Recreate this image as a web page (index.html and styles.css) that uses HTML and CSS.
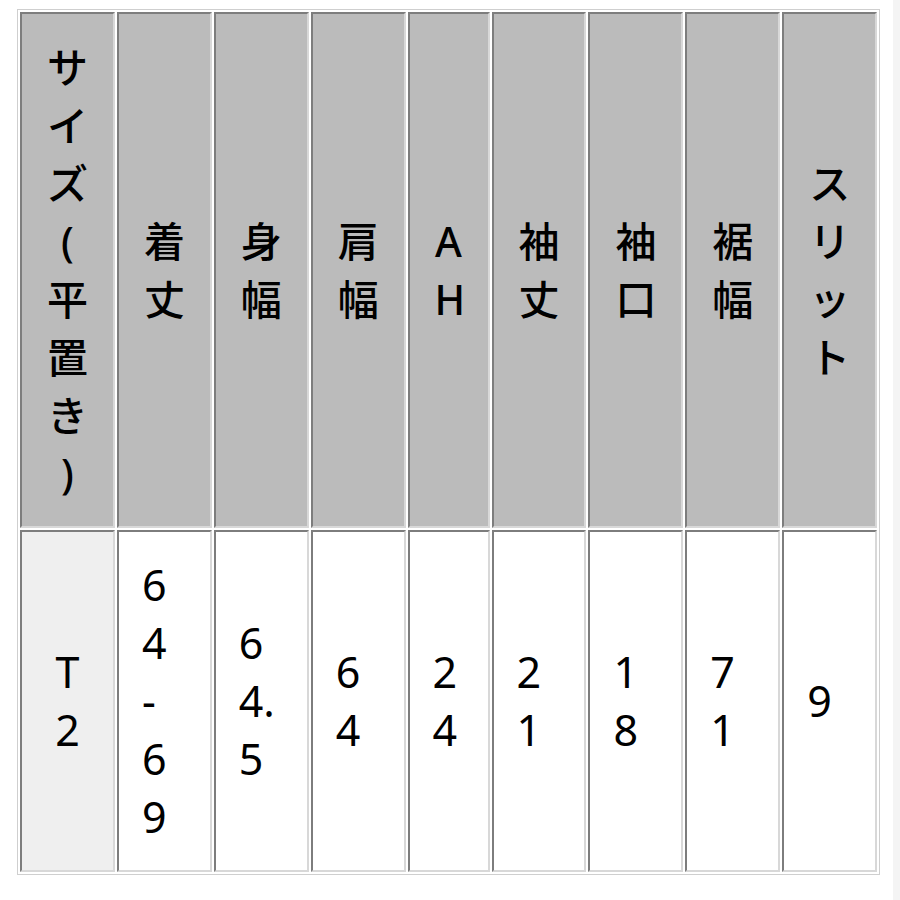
FILE: index.html
```html
<!DOCTYPE html>
<html lang="ja">
<head>
<meta charset="utf-8">
<title>サイズ表</title>
<link rel="stylesheet" href="styles.css">
</head>
<body>
<div class="page">
  <main class="content">
    <table class="size-table">
      <colgroup>
        <col><col><col><col><col class="col-narrow"><col><col><col><col>
      </colgroup>
      <tr class="head-row">
        <th><span class="txt">サイズ(平置き)</span></th>
        <th><span class="txt">着丈</span></th>
        <th><span class="txt">身幅</span></th>
        <th><span class="txt">肩幅</span></th>
        <th><span class="txt">AH</span></th>
        <th><span class="txt">袖丈</span></th>
        <th><span class="txt">袖口</span></th>
        <th><span class="txt">裾幅</span></th>
        <th><span class="txt">スリット</span></th>
      </tr>
      <tr class="data-row">
        <th class="row-head"><span class="txt">T2</span></th>
        <td><span class="num">64-69</span></td>
        <td><span class="num">64.5</span></td>
        <td><span class="num">64</span></td>
        <td><span class="num">24</span></td>
        <td><span class="num">21</span></td>
        <td><span class="num">18</span></td>
        <td><span class="num">71</span></td>
        <td><span class="num">9</span></td>
      </tr>
    </table>
  </main>
  <div class="edge"></div>
</div>
</body>
</html>
```

FILE: styles.css
```css
html, body {
  margin: 0;
  padding: 0;
  background: #ffffff;
}

.page {
  display: flex;
  min-height: 100vh;
}

.content {
  flex: 1;
  padding: 9px 0 0 17px;
}

.edge {
  width: 7px;
  background: #f4f4f4;
}

.size-table {
  table-layout: fixed;
  width: 863px;
  border-collapse: separate;
  border-spacing: 2px;
  border: 1px solid #cfcfcf;
  font-family: "Noto Sans", "Noto Sans CJK JP", sans-serif;
  font-size: 41px;
  line-height: 58px;
  color: #000;
}

.col-narrow {
  width: 82px;
}

.size-table th,
.size-table td {
  border-style: solid;
  border-width: 2px;
  border-color: #7d7d7d #d8d8d8 #d8d8d8 #7d7d7d;
  padding: 24px 25px;
  vertical-align: middle;
  font-weight: 500;
}

.head-row th {
  background: #bbbbbb;
  text-align: center;
  height: 516px;
  box-sizing: border-box;
}

.data-row th,
.data-row td {
  height: 342px;
  box-sizing: border-box;
  font-weight: normal;
  font-size: 43px;
}

.row-head {
  background: #efefef;
  text-align: center;
}

.data-row .row-head {
  padding: 24px 22px;
}

.data-row td {
  background: #ffffff;
  text-align: left;
  padding: 24px 10px 24px 23px;
}

.txt {
  line-break: anywhere;
  word-break: break-all;
}

.num {
  display: block;
  width: 37px;
  line-break: anywhere;
  word-break: break-all;
}
```
